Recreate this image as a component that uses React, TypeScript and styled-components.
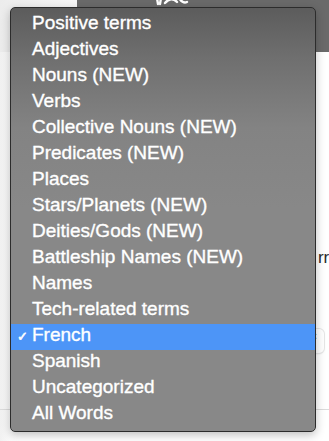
import React from "react";
import styled, { createGlobalStyle } from "styled-components";

const Global = createGlobalStyle`
  html, body { margin: 0; padding: 0; background: #ffffff; }
  body { width: 329px; height: 441px; overflow: hidden; font-family: "Liberation Sans", Arial, sans-serif; }
  #root { width: 329px; height: 441px; }
`;

const Page = styled.div`
  position: relative;
  width: 329px;
  height: 441px;
  overflow: hidden;
  background: #ffffff;
  display: flex;
  flex-direction: column;
`;

const Header = styled.div`
  display: flex;
  height: 52px;
  flex-shrink: 0;
`;

const HeaderSide = styled.div`
  width: 77px;
  background: linear-gradient(to right, #ececec, #f7f7f7);
`;

const HeaderBar = styled.div`
  flex: 1;
  background: #6a6a6a;
  display: flex;
  justify-content: center;
  padding-right: 60px;
`;

const Logo = styled.svg`
  width: 40px;
  height: 8px;
  margin-top: -2px;
`;

const Body = styled.div`
  flex: 1;
  display: flex;
  flex-direction: column;
  background: linear-gradient(to right, #f1f1f1 0px, #fbfbfb 10px, #ffffff 20px);
`;

const FieldLabel = styled.div`
  margin-top: 196px;
  padding-left: 300px;
  height: 20px;
  white-space: nowrap;
  font-size: 17px;
  color: #2a2a2a;
`;

const Hidden = styled.span`
  visibility: hidden;
`;

const SelectBox = styled.div`
  margin-top: 61px;
  margin-left: 200px;
  width: 124px;
  height: 24px;
  border-radius: 5px;
  background: #ffffff;
  box-shadow: 0 0 0 1px #e6e6e6, 0 1px 2px rgba(0, 0, 0, 0.12);
  display: flex;
  align-items: flex-start;
  justify-content: flex-end;
  padding-right: 6px;
  box-sizing: border-box;
`;

const Arrows = styled.span`
  font-size: 10px;
  line-height: 10px;
  color: #333;
  margin-top: 3px;
`;

const Divider = styled.div`
  margin-top: 56px;
  height: 1px;
  background: #dcdcdc;
`;

const FooterText = styled.div`
  margin-top: 28px;
  padding-left: 33px;
  font-size: 17px;
  color: #333;
  white-space: nowrap;
`;

const Accent = styled.span`
  color: #e0582a;
`;

const Menu = styled.div`
  position: absolute;
  left: 10px;
  top: 7px;
  width: 306px;
  height: 425px;
  box-sizing: border-box;
  border: 1px solid #2c2c2c;
  border-radius: 5px;
  padding: 4px 0 0;
  background: linear-gradient(to bottom, #5c5c5c 0px, #6f6f6f 50px, #838383 120px, #888888 200px, #888888 100%);
  box-shadow: 0 3px 10px rgba(0, 0, 0, 0.25);
  display: flex;
  flex-direction: column;
`;

const Item = styled.div<{ $active?: boolean }>`
  height: 26px;
  flex-shrink: 0;
  box-sizing: border-box;
  display: flex;
  align-items: center;
  padding: 0 0 4px 0;
  background: ${(p) => (p.$active ? "#4d95f7" : "transparent")};
  color: #ffffff;
  font-size: 19px;
  white-space: nowrap;
  -webkit-text-stroke: 0.35px #ffffff;
`;

const Check = styled.span`
  width: 21px;
  text-align: center;
  padding-left: 2px;
  box-sizing: border-box;
  font-size: 13px;
  font-family: "DejaVu Sans", sans-serif;
  margin-top: 3px;
  -webkit-text-stroke: 0.6px #ffffff;
`;

const items = [
  "Positive terms",
  "Adjectives",
  "Nouns (NEW)",
  "Verbs",
  "Collective Nouns (NEW)",
  "Predicates (NEW)",
  "Places",
  "Stars/Planets (NEW)",
  "Deities/Gods (NEW)",
  "Battleship Names (NEW)",
  "Names",
  "Tech-related terms",
  "French",
  "Spanish",
  "Uncategorized",
  "All Words",
];

export default function App() {
  return (
    <>
      <Global />
      <Page>
        <Header>
          <HeaderSide />
          <HeaderBar>
            <Logo viewBox="0 0 40 8">
              <path d="M4 0 L5 6 M8 0 L7 6 M12 5 Q18 -2 24 4 M26 0 Q30 6 34 4" stroke="#ffffff" strokeWidth="2.4" fill="none" strokeLinecap="round" />
            </Logo>
          </HeaderBar>
        </Header>
        <Body>
          <FieldLabel>
            <Hidden>Mi</Hidden>rror
          </FieldLabel>
          <SelectBox>
            <Arrows>⇕</Arrows>
          </SelectBox>
          <Divider />
          <FooterText>
            <Accent>M</Accent>anage your favorite words
          </FooterText>
        </Body>
        <Menu>
          {items.map((t) => (
            <Item key={t} $active={t === "French"}>
              <Check>{t === "French" ? "✓" : ""}</Check>
              {t}
            </Item>
          ))}
        </Menu>
      </Page>
    </>
  );
}
